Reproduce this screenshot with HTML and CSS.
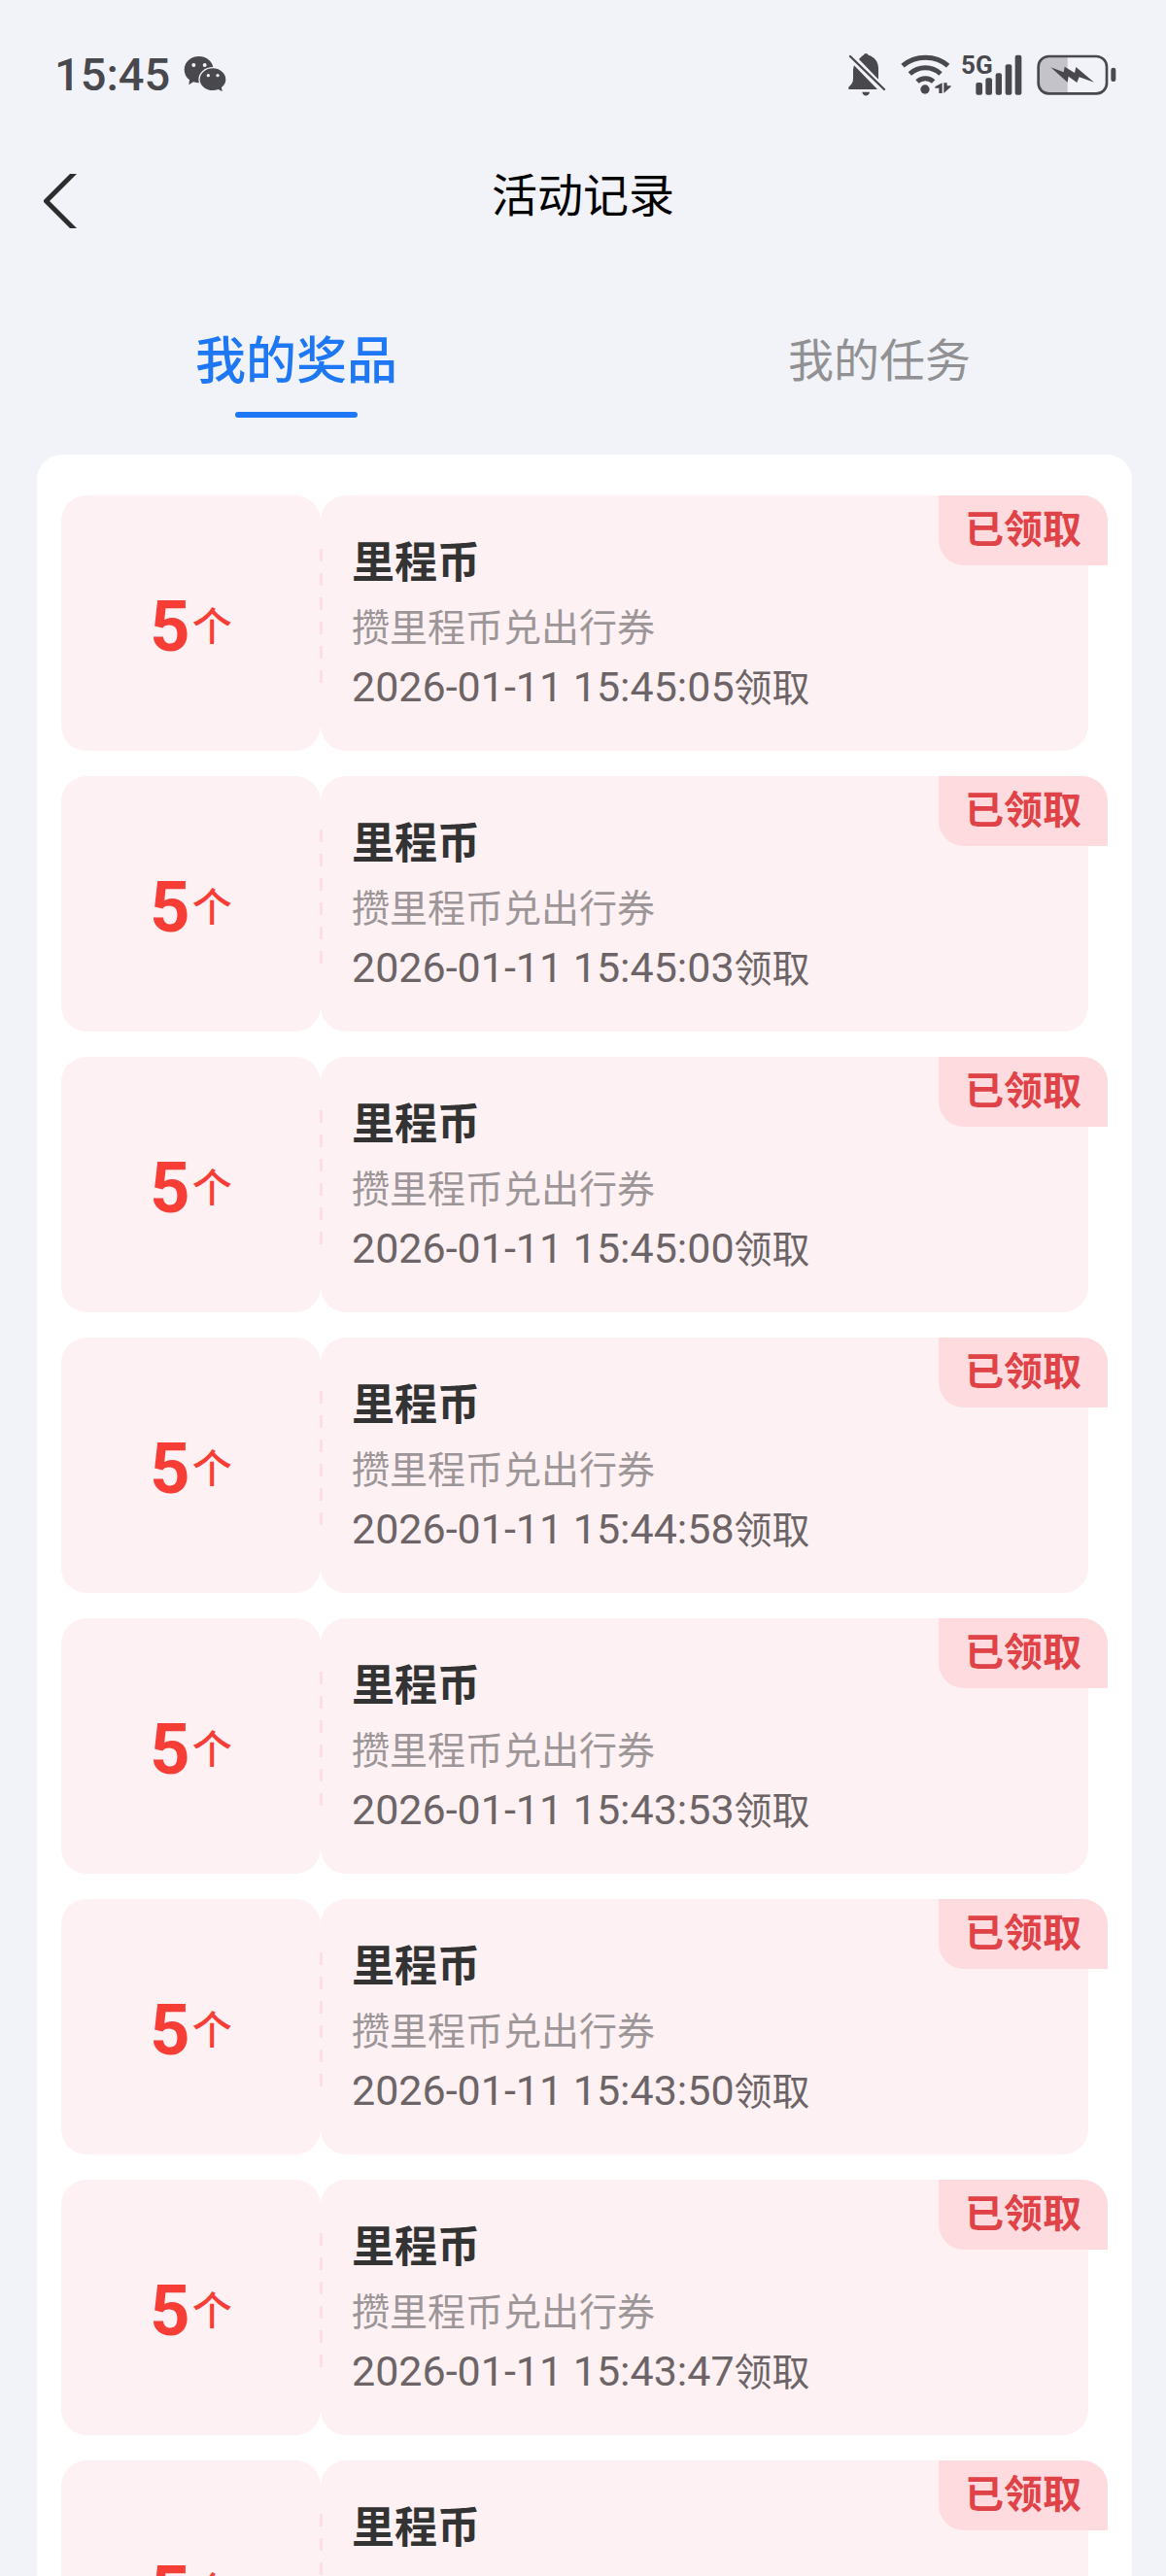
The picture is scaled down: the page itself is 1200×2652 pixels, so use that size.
FILE: index.html
```html
<!DOCTYPE html>
<html lang="zh-CN">
<head>
<meta charset="utf-8">
<meta name="viewport" content="width=device-width, initial-scale=1">
<title>活动记录</title>
<link rel="stylesheet" href="styles.css">
</head>
<body>
<div class="app">
  <div class="status">
    <div class="status-left">
      <span class="clock">15:45</span>
      <svg class="wechat" width="44" height="40" viewBox="565 84 132 120" aria-hidden="true">
        <path fill="#48484d" d="M612 87c-25 0-45 18-45 41 0 13 6 24 16 32l-2 15 14-9c6 2 12 3 18 3 26 0 44-18 44-41s-20-41-45-41z"/>
        <path fill="#48484d" stroke="#f2f3f9" stroke-width="4" d="M655 122c-23 0-42 16-42 36s19 36 42 36c6 0 12-1 17-3l15 8-3-15c8-7 13-16 13-26 0-20-19-36-42-36z"/>
        <g fill="#f2f3f9"><circle cx="596" cy="114" r="6"/><circle cx="630" cy="114" r="6"/><circle cx="641" cy="146" r="5"/><circle cx="670" cy="146" r="5"/></g>
      </svg>
    </div>
    <div class="status-right">
      <svg width="40" height="46" viewBox="66 42 120 138" aria-hidden="true">
        <path fill="#48484d" d="M116 50a8 8 0 0 1 15 0c19 5 31 21 31 41v34l-60-62c4-5 9-10 14-13zM87 82l72 74H70v-7c8-7 14-14 14-25V94zM112 164h23c-2 15-21 15-23 0z"/>
        <path stroke="#48484d" stroke-width="7" stroke-linecap="round" d="M75 54l105 102"/>
      </svg>
      <svg class="wifi" width="52" height="42" viewBox="229 46 156 126" aria-hidden="true">
        <g fill="none" stroke="#48484d" stroke-width="15"><path d="M235 81c39-34 102-34 140 0"/><path d="M257 106c27-25 69-25 95 0"/><path d="M280 130c14-13 36-13 50 0"/></g>
        <circle cx="304" cy="154" r="14" fill="#48484d"/>
        <path fill="#48484d" d="M357 134v32h-10v-16h-12v-4zM362 134v32l22-20v-3h-12v-9z"/>
      </svg>
      <span class="signal">
        <span class="network">5G</span>
        <svg width="48" height="42" viewBox="460 46 144 126" aria-hidden="true">
          <g fill="#48484d"><rect x="461" y="133" width="20" height="38" rx="6"/><rect x="491" y="119" width="20" height="52" rx="6"/><rect x="522" y="104" width="19" height="67" rx="6"/><rect x="552" y="77" width="20" height="94" rx="6"/><rect x="582" y="48" width="20" height="123" rx="6"/></g>
        </svg>
      </span>
      <svg width="82" height="42" viewBox="650 46 246 126" aria-hidden="true">
        <path fill="#c3c3c9" d="M745 52v114h-58q-31 0-31-31V83q0-31 31-31z"/>
        <rect x="655" y="52" width="211" height="115" rx="32" fill="none" stroke="#48484d" stroke-width="8"/>
        <rect x="879" y="87" width="15" height="43" rx="7" fill="#48484d"/>
        <path fill="#48484d" d="M693 86l40 15 3-17 31 19 4-18 56 47-46-16-7 17-26-19-3 18z"/>
      </svg>
    </div>
  </div>

  <header class="nav">
    <button class="back" type="button" aria-label="返回">
      <svg width="34" height="56" viewBox="0 0 34 56" aria-hidden="true"><path fill="#2d2d2f" d="M27 0h7L6 28l28 28h-7L0 29v-2z"/></svg>
    </button>
    <h1 class="title">活动记录</h1>
  </header>

  <div class="tabs" role="tablist">
    <button class="tab active" type="button" role="tab" aria-selected="true">我的奖品</button>
    <button class="tab" type="button" role="tab" aria-selected="false">我的任务</button>
  </div>

  <ul class="panel">
    <li class="record"><div class="amount"><b>5</b><span>个</span></div><div class="info"><h2>里程币</h2><p class="desc">攒里程币兑出行券</p><p class="date"><time>2026-01-11 15:45:05</time>领取</p></div><span class="badge">已领取</span></li>
    <li class="record"><div class="amount"><b>5</b><span>个</span></div><div class="info"><h2>里程币</h2><p class="desc">攒里程币兑出行券</p><p class="date"><time>2026-01-11 15:45:03</time>领取</p></div><span class="badge">已领取</span></li>
    <li class="record"><div class="amount"><b>5</b><span>个</span></div><div class="info"><h2>里程币</h2><p class="desc">攒里程币兑出行券</p><p class="date"><time>2026-01-11 15:45:00</time>领取</p></div><span class="badge">已领取</span></li>
    <li class="record"><div class="amount"><b>5</b><span>个</span></div><div class="info"><h2>里程币</h2><p class="desc">攒里程币兑出行券</p><p class="date"><time>2026-01-11 15:44:58</time>领取</p></div><span class="badge">已领取</span></li>
    <li class="record"><div class="amount"><b>5</b><span>个</span></div><div class="info"><h2>里程币</h2><p class="desc">攒里程币兑出行券</p><p class="date"><time>2026-01-11 15:43:53</time>领取</p></div><span class="badge">已领取</span></li>
    <li class="record"><div class="amount"><b>5</b><span>个</span></div><div class="info"><h2>里程币</h2><p class="desc">攒里程币兑出行券</p><p class="date"><time>2026-01-11 15:43:50</time>领取</p></div><span class="badge">已领取</span></li>
    <li class="record"><div class="amount"><b>5</b><span>个</span></div><div class="info"><h2>里程币</h2><p class="desc">攒里程币兑出行券</p><p class="date"><time>2026-01-11 15:43:47</time>领取</p></div><span class="badge">已领取</span></li>
    <li class="record"><div class="amount"><b>5</b><span>个</span></div><div class="info"><h2>里程币</h2></div><span class="badge">已领取</span></li>
  </ul>
</div>
</body>
</html>
```
FILE: styles.css
```css
* { box-sizing: border-box; margin: 0; padding: 0; }

body {
  background: #f2f3f9;
  color: #333;
  font-family: "Noto Sans CJK SC", sans-serif;
}

button { border: 0; background: none; font: inherit; color: inherit; }
svg { display: block; }

/* One screen; the record list runs off its lower edge */
.app {
  display: flex;
  flex-direction: column;
  height: 100vh;
  overflow: hidden;
}

.status {
  display: flex;
  flex: none;
  justify-content: space-between;
  align-items: center;
  height: 154px;
  padding: 0 51px 0 56px;
}
.status-left { display: flex; align-items: center; gap: 14px; }
.status-right { display: flex; align-items: center; gap: 15px; }
.clock {
  font: 500 47px/56px Roboto, sans-serif;
  color: #48484d;
}
.signal { position: relative; padding-left: 10px; }
.network {
  position: absolute;
  top: 0;
  left: -5px;
  font: 700 26px/22px "Liberation Sans Narrow", Roboto, sans-serif;
  color: #48484d;
}

.nav {
  display: grid;
  flex: none;
  grid-template-columns: 1fr auto 1fr;
  align-items: center;
  height: 106px;
  padding: 0 45px;
}
.back { justify-self: start; cursor: pointer; }
.title {
  padding-bottom: 18px;
  font-size: 47px;
  line-height: 64px;
  font-weight: 400;
  color: #000;
}

.tabs {
  display: flex;
  flex: none;
  justify-content: space-around;
  align-items: center;
  height: 208px;
  padding-top: 8px;
}
.tab {
  position: relative;
  font-size: 47px;
  line-height: 72px;
  color: #919193;
  cursor: pointer;
}
.tab.active { font-size: 52px; font-weight: 500; color: #1e78f5; }
.tab.active::after {
  content: "";
  position: absolute;
  left: 50%;
  bottom: -26px;
  width: 126px;
  height: 6px;
  margin-left: -63px;
  border-radius: 3px;
  background: #1e78f5;
}

.panel {
  display: flex;
  flex: none;
  flex-direction: column;
  gap: 26px;
  margin: 0 35px 0 38px;
  padding: 42px 25px;
  border-radius: 26px;
  background: #fff;
  list-style: none;
}
.record {
  position: relative;
  display: flex;
  min-height: 263px;
  padding-right: 20px;
}
.amount,
.info { border-radius: 26px; background: #fef1f3; }
.amount {
  display: flex;
  flex: none;
  justify-content: center;
  align-items: center;
  gap: 2px;
  width: 267px;
  color: #f63e37;
}
.amount b { padding-top: 8px; font: 700 72px/80px Roboto, sans-serif; }
.amount span { font-size: 41px; font-weight: 500; line-height: 56px; }
.info {
  position: relative;
  flex: 1;
  padding: 33px 32px 0;
}
/* Perforation between the two halves of the coupon */
.info::before {
  content: "";
  position: absolute;
  top: 55px;
  left: -1px;
  width: 3px;
  height: 138px;
  background: repeating-linear-gradient(#fbdfe3 0 13px, transparent 13px 25px);
}
.info h2 { font-size: 44px; line-height: 66px; font-weight: 700; }
.desc { font-size: 39px; line-height: 68px; color: #9d9698; }
.date { font-size: 39px; line-height: 56px; color: #6c6466; white-space: nowrap; }
.date time { font-family: Roboto, sans-serif; font-size: 43px; }
.badge {
  position: absolute;
  top: 0;
  right: 0;
  height: 72px;
  padding: 0 27px;
  border-radius: 0 26px 0 26px;
  background: #fddbde;
  color: #df4347;
  font-size: 40px;
  font-weight: 700;
  line-height: 64px;
}
```
